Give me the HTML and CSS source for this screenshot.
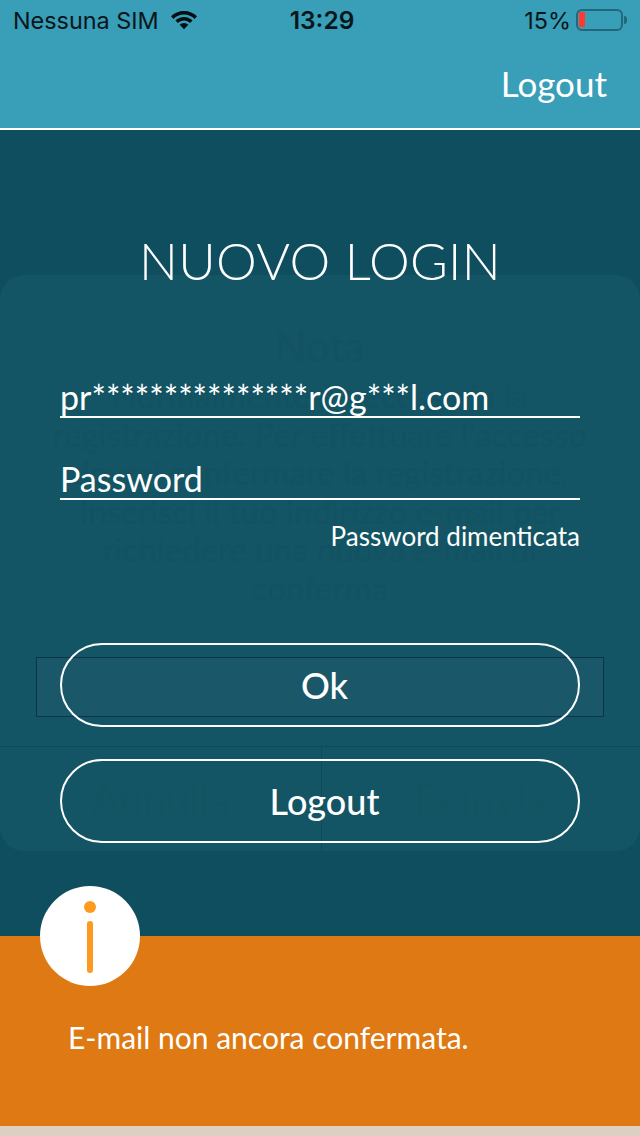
FILE: index.html
```html
<!DOCTYPE html>
<html lang="it">
<head>
<meta charset="utf-8">
<title>Nuovo login</title>
<link rel="stylesheet" href="styles.css">
</head>
<body>
<div class="page">
  <header class="topbar">
    <div class="status">
      <div class="status-left">
        <span>Nessuna SIM</span>
        <svg class="wifi" width="30" height="22" viewBox="0 0 30 22"><path d="M15 3C9.900 3 5.300 5 2 8.300l2.500 2.600C7.200 8.200 10.900 6.500 15 6.500s7.800 1.700 10.500 4.400L28 8.300C24.700 5 20.100 3 15 3z"/><path d="M15 9c-3.400 0-6.400 1.300-8.600 3.500L9 15.100c1.500-1.500 3.600-2.500 6-2.500s4.500 1 6 2.500l2.600-2.600C21.400 10.300 18.400 9 15 9z"/><path d="M15 15c-1.700 0-3.200.7-4.300 1.800L15 21.200l4.300-4.400C18.200 15.700 16.700 15 15 15z"/></svg>
      </div>
      <div class="clock">13:29</div>
      <div class="status-right">
        <span>15%</span>
        <div class="battery"><div class="battery-level"></div></div>
        <div class="battery-tip"></div>
      </div>
    </div>
    <div class="navrow"><span class="nav-logout">Logout</span></div>
  </header>
  <main class="content">
    <div class="ghost">
      <div class="ghost-title">Nota</div>
      <div class="ghost-text">
        <p>Normalmente è necessaria la</p>
        <p>registrazione. Per effettuare l'accesso</p>
        <p>dovrai confermare la registrazione.</p>
        <p>Inserisci il tuo indirizzo e-mail per</p>
        <p>richiedere una nuova e-mail di</p>
        <p>conferma</p>
      </div>
      <div class="ghost-input"></div>
      <div class="ghost-actions">
        <div class="ghost-action">Annulla</div>
        <div class="ghost-action">Reinvia</div>
      </div>
    </div>
    <div class="form">
      <h1 class="title">NUOVO LOGIN</h1>
      <div class="field field-email">pr***************r@g***l.com</div>
      <div class="field field-password">Password</div>
      <div class="forgot">Password dimenticata</div>
      <div class="btn btn-ok">Ok</div>
      <div class="btn btn-logout">Logout</div>
    </div>
  </main>
  <section class="banner">
    <div class="info-badge">
      <svg width="100" height="100" viewBox="0 0 100 100"><circle cx="50" cy="21" r="6" fill="#fe9a1f"/><rect x="47" y="35" width="6" height="52" rx="3" fill="#fe9a1f"/></svg>
    </div>
    <p class="banner-text">E-mail non ancora confermata.</p>
  </section>
  <div class="strip"></div>
</div>
</body>
</html>
```
FILE: styles.css
```css
* { box-sizing: border-box; margin: 0; padding: 0; }
html, body { background: #0f4e5e; }
.page {
  width: 640px;
  height: 1136px;
  display: flex;
  flex-direction: column;
  overflow: hidden;
  font-family: Lato, "Liberation Sans", sans-serif;
  color: #fff;
}
.topbar {
  height: 130px;
  flex: none;
  background: #399eb7;
  border-bottom: 2px solid #fff;
}
.status {
  height: 40px;
  display: grid;
  grid-template-columns: 1fr auto 1fr;
  align-items: center;
  padding: 0 13px 0 13px;
  font-family: Inter, Roboto, sans-serif;
  font-size: 23.400px;
  color: #07161b;
}
.status-left { display: flex; align-items: center; gap: 10px; }
.wifi { fill: #050f12; margin-top: -3px; }
.clock { font-weight: 600; font-size: 24.500px; padding-left: 4px; }
.status-right { display: flex; align-items: center; justify-content: flex-end; }
.battery {
  width: 47px;
  height: 22px;
  margin-left: 5px;
  border: 2px solid #23677b;
  border-radius: 6px;
  padding: 1px;
}
.battery-level { width: 6px; height: 15px; background: #ff3b30; }
.battery-tip {
  width: 3px;
  height: 8px;
  margin-left: 1px;
  background: #23677b;
  border-radius: 0 3px 3px 0;
}
.navrow {
  height: 88px;
  display: flex;
  justify-content: flex-end;
  align-items: center;
  padding: 0 33px 0 0;
}
.nav-logout { font-size: 35px; line-height: 88px; margin-top: -2px; }
.content {
  position: relative;
  flex: none;
  height: 806px;
  background: #0f4e5e;
}
.ghost {
  position: absolute;
  left: 0;
  top: 145px;
  width: 640px;
  height: 576px;
  background: #135564;
  border-radius: 24px;
  color: #125262;
  display: flex;
  flex-direction: column;
  align-items: center;
  text-align: center;
}
.ghost-title { font-size: 42px; font-weight: 400; margin-top: 47px; line-height: 48px; }
.ghost-text { font-size: 33px; line-height: 38.500px; margin-top: 6px; white-space: nowrap; }
.ghost-input {
  margin-top: 50px;
  width: 568px;
  height: 60px;
  flex: none;
  background: #1a5869;
  border: 1px solid #0b3349;
}
.ghost-actions {
  margin-top: 29px;
  width: 100%;
  flex: 1;
  display: grid;
  grid-template-columns: 321px 1fr;
  border-top: 1px solid #0f4a5c;
  font-size: 42px;
}
.ghost-action { display: flex; align-items: center; justify-content: center; color: #135463; }
.ghost-action + .ghost-action { border-left: 1px solid #0f4a5c; }
.form {
  position: relative;
  padding: 0 60px;
  display: flex;
  flex-direction: column;
}
.title {
  font-size: 51.500px;
  font-weight: 300;
  line-height: 60px;
  text-align: center;
  margin-top: 100px;
  letter-spacing: 0.300px;
}
.field {
  font-size: 34px;
  line-height: 43px;
  border-bottom: 2px solid #fff;
  height: 43px;
}
.field-email { margin-top: 85px; }
.field-password { margin-top: 39px; }
.forgot {
  font-size: 26px;
  line-height: 30px;
  text-align: right;
  margin-top: 21px;
}
.btn {
  height: 84px;
  border: 2px solid #fff;
  border-radius: 42px;
  padding-left: 9px;
  font-size: 36px;
  font-weight: 500;
  display: flex;
  align-items: center;
  justify-content: center;
}
.btn-ok { margin-top: 92px; }
.btn-logout { margin-top: 32px; }
.banner {
  position: relative;
  flex: none;
  height: 190px;
  background: #de7913;
  padding: 82px 0 0 68px;
}
.info-badge {
  position: absolute;
  left: 40px;
  top: -50px;
  width: 100px;
  height: 100px;
  border-radius: 50%;
  background: #fff;
}
.banner-text { font-size: 30px; line-height: 38px; }
.strip { height: 10px; flex: none; background: #dccfc3; }
```
